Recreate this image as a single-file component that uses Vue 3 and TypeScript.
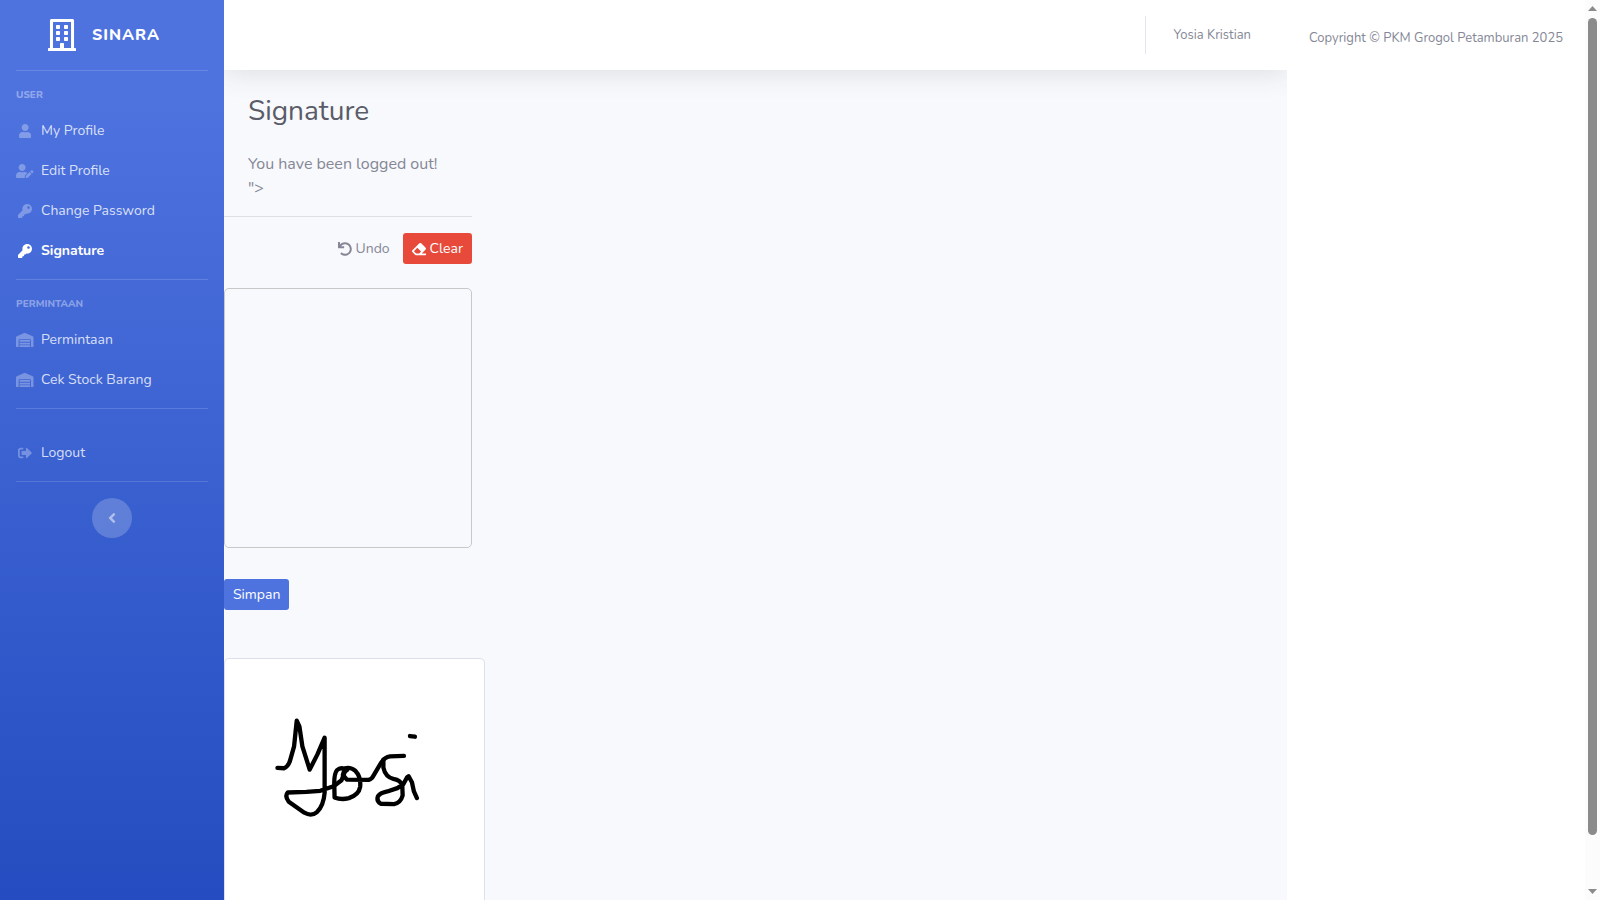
<script setup lang="ts">
interface Icon {
  width: number
  path: string
}

interface NavItem {
  label: string
  icon: Icon
  active?: boolean
}

interface NavGroup {
  heading?: string
  items: NavItem[]
}

const USER_HEAD = 'M224 256c70.7 0 128-57.3 128-128S294.7 0 224 0 96 57.3 96 128s57.3 128 128 128z'

const building: Icon = {
  width: 448,
  path: 'M128 148v-40c0-6.6 5.4-12 12-12h40c6.6 0 12 5.4 12 12v40c0 6.6-5.4 12-12 12h-40c-6.6 0-12-5.4-12-12zm140 12h40c6.6 0 12-5.4 12-12v-40c0-6.6-5.4-12-12-12h-40c-6.6 0-12 5.4-12 12v40c0 6.6 5.4 12 12 12zm-128 96h40c6.6 0 12-5.4 12-12v-40c0-6.6-5.4-12-12-12h-40c-6.6 0-12 5.4-12 12v40c0 6.6 5.4 12 12 12zm128 0h40c6.6 0 12-5.4 12-12v-40c0-6.6-5.4-12-12-12h-40c-6.6 0-12 5.4-12 12v40c0 6.6 5.4 12 12 12zm-76 84v-40c0-6.6-5.4-12-12-12h-40c-6.6 0-12 5.4-12 12v40c0 6.6 5.4 12 12 12h40c6.6 0 12-5.4 12-12zm76 12h40c6.6 0 12-5.4 12-12v-40c0-6.6-5.4-12-12-12h-40c-6.6 0-12 5.4-12 12v40c0 6.6 5.4 12 12 12zm180 124v36H0v-36c0-6.6 5.4-12 12-12h19.5V24c0-13.3 10.7-24 24-24h337c13.3 0 24 10.7 24 24v440H436c6.6 0 12 5.4 12 12zM79.5 463H192v-67c0-6.6 5.4-12 12-12h40c6.6 0 12 5.4 12 12v67h112.500V49L80 48l-.5 415z',
}
const user: Icon = {
  width: 448,
  path: USER_HEAD + 'm89.6 32h-16.7c-22.2 10.2-46.9 16-72.9 16s-50.6-5.8-72.9-16h-16.7C60.2 288 0 348.2 0 422.4V464c0 26.5 21.5 48 48 48h352c26.5 0 48-21.5 48-48v-41.6c0-74.2-60.2-134.4-134.4-134.4z',
}
const userEdit: Icon = {
  width: 640,
  path: USER_HEAD + 'm89.6 32h-16.7c-22.2 10.2-46.9 16-72.9 16s-50.6-5.8-72.9-16h-16.7C60.2 288 0 348.2 0 422.4V464c0 26.5 21.5 48 48 48h274.9c-2.4-6.8-3.4-14-2.600-21.3l6.800-60.900 1.200-11.100 7.900-7.900 77.300-77.300c-24.500-27.700-60-45.500-99.900-45.500zm45.300 145.300l-6.800 61c-1.100 10.200 7.500 18.800 17.600 17.600l60.900-6.800 137.900-137.900-71.700-71.700-137.900 137.800zM633 268.900L595.100 231c-9.300-9.300-24.500-9.300-33.800 0l-37.800 37.800-4.100 4.100 71.800 71.700 41.800-41.800c9.300-9.400 9.300-24.500 0-33.900z',
}
const key: Icon = {
  width: 512,
  path: 'M512 176.001C512 273.203 433.202 352 336 352c-11.22 0-22.19-1.062-32.827-3.069l-24.012 27.014A23.999 23.999 0 0 1 261.223 384H224v40c0 13.255-10.745 24-24 24h-40v40c0 13.255-10.745 24-24 24H24c-13.255 0-24-10.745-24-24v-78.059c0-6.365 2.529-12.47 7.029-16.971l161.802-161.802C163.108 213.814 160 195.271 160 176 160 78.798 238.797.001 335.999 0 433.488-.001 512 78.511 512 176.001zM336 128c0 26.51 21.49 48 48 48s48-21.49 48-48-21.49-48-48-48-48 21.49-48 48z',
}
const warehouse: Icon = {
  width: 640,
  path: 'M504 352H136.400c-4.400 0-8 3.600-8 8l-.1 48c0 4.400 3.600 8 8 8H504c4.400 0 8-3.600 8-8v-48c0-4.400-3.600-8-8-8zm0 96H136.100c-4.400 0-8 3.600-8 8l-.1 48c0 4.400 3.600 8 8 8h368c4.400 0 8-3.600 8-8v-48c0-4.400-3.600-8-8-8zm0-192H136.600c-4.400 0-8 3.600-8 8l-.1 48c0 4.400 3.600 8 8 8H504c4.400 0 8-3.600 8-8v-48c0-4.400-3.600-8-8-8zm106.500-139L338.400 3.700a48.150 48.150 0 0 0-36.900 0L29.500 117C11.700 124.500 0 141.900 0 161.300V504c0 4.400 3.600 8 8 8h80c4.400 0 8-3.600 8-8V256c0-17.600 14.600-32 32.600-32h382.800c18 0 32.600 14.400 32.600 32v248c0 4.400 3.600 8 8 8h80c4.400 0 8-3.600 8-8V161.300c0-19.400-11.700-36.800-29.500-44.300z',
}
const signOut: Icon = {
  width: 512,
  path: 'M497 273L329 441c-15 15-41 4.500-41-17v-96H152c-13.300 0-24-10.700-24-24v-96c0-13.300 10.700-24 24-24h136V88c0-21.400 25.900-32 41-17l168 168c9.300 9.400 9.300 24.600 0 34zM192 436v-40c0-6.600-5.400-12-12-12H96c-17.700 0-32-14.300-32-32V160c0-17.700 14.300-32 32-32h84c6.600 0 12-5.400 12-12V76c0-6.600-5.400-12-12-12H96c-53 0-96 43-96 96v192c0 53 43 96 96 96h84c6.600 0 12-5.400 12-12z',
}
const angleLeft: Icon = {
  width: 256,
  path: 'M31.7 239l136-136c9.400-9.400 24.600-9.400 33.900 0l22.600 22.600c9.400 9.400 9.400 24.600 0 33.900L127.900 256l96.400 96.400c9.400 9.400 9.400 24.600 0 33.900L201.700 409c-9.400 9.400-24.600 9.400-33.900 0l-136-136c-9.500-9.400-9.500-24.600-.1-34z',
}
const undo: Icon = {
  width: 512,
  path: 'M212.333 224.333H12c-6.627 0-12-5.373-12-12V12C0 5.373 5.373 0 12 0h48c6.627 0 12 5.373 12 12v78.112C117.773 39.279 184.26 7.47 258.175 8.007c136.906.994 246.448 111.623 246.157 248.532C504.041 393.258 393.12 504 256.333 504c-64.089 0-122.496-24.313-166.51-64.215-5.099-4.622-5.334-12.554-.467-17.42l33.967-33.967c4.474-4.474 11.662-4.717 16.401-.525C170.76 415.336 211.58 432 256.333 432c97.268 0 176-78.716 176-176 0-97.267-78.716-176-176-176-58.496 0-110.28 28.476-142.274 72.333h98.274c6.627 0 12 5.373 12 12v48c0 6.627-5.373 12-12 12z',
}
const eraser: Icon = {
  width: 512,
  path: 'M497.941 273.941c18.745-18.745 18.745-49.137 0-67.882l-160-160c-18.745-18.745-49.136-18.746-67.883 0l-256 256c-18.745 18.745-18.745 49.137 0 67.882l96 96A48.004 48.004 0 0 0 144 480h356c6.627 0 12-5.373 12-12v-40c0-6.627-5.373-12-12-12H355.883l142.058-142.059zm-302.627-62.627l137.373 137.373L265.373 416H150.628l-80-80 124.686-124.686z',
}

const groups: NavGroup[] = [
  {
    heading: 'User',
    items: [
      { label: 'My Profile', icon: user },
      { label: 'Edit Profile', icon: userEdit },
      { label: 'Change Password', icon: key },
      { label: 'Signature', icon: key, active: true },
    ],
  },
  {
    heading: 'Permintaan',
    items: [
      { label: 'Permintaan', icon: warehouse },
      { label: 'Cek Stock Barang', icon: warehouse },
    ],
  },
  { items: [{ label: 'Logout', icon: signOut }] },
]

const strokes: string[] = [
  'M53 205 L73 206 Q84 202 90 186 L103 140 L111 63 L119 80 L128 140 L150 210 L173 165 L195 114 L195 280 Q192 318 172 338 Q155 352 134 340 L87 307 Q74 290 84 279 L140 277 L182 274 L222 260 L246 242 L257 214',
  'M262 212 Q245 200 232 212 Q224 222 224 250 L225 294 Q245 302 268 296 Q298 286 302 262 Q305 232 288 214 Q274 202 256 206 L250 226 L262 240 L328 241 Q338 238 344 225 L366 188 Q376 172 392 170 L434 169',
  'M372 180 L372 204 Q378 232 402 238 Q424 242 429 258 L430 288 Q424 310 404 314 L364 313 Q350 304 356 290 Q364 280 384 276 L414 266 L432 254 L443 234 L448 230 L458 248 L464 276 L473 296',
  'M452 109 L467 111',
]
</script>

<template>
  <div class="shell">
    <div class="page">
      <nav class="sidebar" aria-label="Main">
        <a class="brand" href="#">
          <svg class="brand-icon" :viewBox="`0 0 ${building.width} 512`" aria-hidden="true"><path :d="building.path" /></svg>
          <span>SINARA</span>
        </a>
        <section v-for="(group, i) in groups" :key="i" class="group">
          <h2 v-if="group.heading" class="group-heading">{{ group.heading }}</h2>
          <ul class="nav-list">
            <li v-for="item in group.items" :key="item.label">
              <a class="nav-link" :class="{ active: item.active }" href="#">
                <span class="nav-icon">
                  <svg :viewBox="`0 0 ${item.icon.width} 512`" aria-hidden="true"><path :d="item.icon.path" /></svg>
                </span>
                <span>{{ item.label }}</span>
              </a>
            </li>
          </ul>
        </section>
        <div class="toggle-row">
          <button class="toggle" type="button" aria-label="Collapse sidebar">
            <svg :viewBox="`0 0 ${angleLeft.width} 512`" aria-hidden="true"><path :d="angleLeft.path" /></svg>
          </button>
        </div>
      </nav>

      <main class="content">
        <header class="topbar">
          <a class="account" href="#">Yosia Kristian</a>
        </header>
        <div class="intro">
          <h1>Signature</h1>
          <p>You have been logged out!<br />"&gt;</p>
        </div>
        <div class="signer">
          <div class="actions">
            <button class="btn plain" type="button">
              <svg :viewBox="`0 0 ${undo.width} 512`" aria-hidden="true"><path :d="undo.path" /></svg>
              <span>Undo</span>
            </button>
            <button class="btn danger" type="button">
              <svg :viewBox="`0 0 ${eraser.width} 512`" aria-hidden="true"><path :d="eraser.path" /></svg>
              <span>Clear</span>
            </button>
          </div>
          <canvas class="pad" aria-label="Signature pad"></canvas>
          <button class="btn primary" type="button">Simpan</button>
        </div>
        <figure class="saved">
          <svg viewBox="0 0 252 252" role="img" aria-label="Saved signature">
            <g transform="translate(31 37) scale(0.33333)">
              <path v-for="(d, i) in strokes" :key="i" :d="d" />
            </g>
          </svg>
        </figure>
      </main>

      <footer class="footer">Copyright © PKM Grogol Petamburan 2025</footer>
    </div>

    <div class="scrollbar" aria-hidden="true">
      <svg viewBox="0 0 9 5"><path d="M0 5 4.500 0 9 5z" /></svg>
      <span class="thumb"></span>
      <svg viewBox="0 0 9 5"><path d="M0 0 4.500 5 9 0z" /></svg>
    </div>
  </div>
</template>

<style>
body {
  margin: 0;
  background: #fff;
}
</style>

<style scoped>
.shell {
  display: flex;
  height: 100vh;
  overflow: hidden;
  font-family: Nunito, Lato, "Open Sans", sans-serif;
  font-size: 16px;
  line-height: 24px;
  color: #858796;
}

.shell * {
  box-sizing: border-box;
}

svg {
  display: block;
  fill: currentColor;
}

a {
  color: inherit;
  text-decoration: none;
}

.page {
  display: flex;
  flex: 1;
  min-width: 0;
  align-self: flex-start;
  min-height: 100vh;
}

.sidebar {
  position: relative;
  z-index: 2;
  flex: 0 0 224px;
  background: linear-gradient(180deg, #4e73df 10%, #224abe 100%);
  color: #fff;
}

.brand {
  display: flex;
  align-items: center;
  justify-content: center;
  gap: 16px;
  height: 70px;
  padding: 0 32px 0 16px;
  font-weight: 800;
  letter-spacing: 1px;
}

.brand-icon {
  width: 28px;
  height: 32px;
}

.group {
  margin: 0 16px;
  padding: 16px 0 8px;
  border-top: 1px solid rgba(255, 255, 255, 0.15);
}

.group:nth-of-type(3) {
  padding-top: 24px;
}

.group-heading {
  margin: 0 0 8px;
  font-size: 10px;
  line-height: 16px;
  font-weight: 800;
  text-transform: uppercase;
  color: rgba(255, 255, 255, 0.4);
}

.nav-list {
  margin: 0;
  padding: 0;
  list-style: none;
}

.nav-link {
  display: flex;
  align-items: center;
  gap: 7px;
  height: 40px;
  font-size: 14px;
  color: rgba(255, 255, 255, 0.8);
}

.nav-icon {
  display: flex;
  justify-content: center;
  width: 18px;
  color: rgba(255, 255, 255, 0.3);
}

.nav-icon svg {
  height: 14px;
  max-width: 18px;
}

.active {
  font-weight: 700;
  color: #fff;
}

.active .nav-icon {
  color: #fff;
}

.toggle-row {
  display: flex;
  justify-content: center;
  margin: 0 16px;
  padding-top: 16px;
  border-top: 1px solid rgba(255, 255, 255, 0.15);
}

.toggle {
  display: flex;
  align-items: center;
  justify-content: center;
  width: 40px;
  height: 40px;
  padding: 0;
  border: 0;
  border-radius: 50%;
  background: rgba(255, 255, 255, 0.2);
  color: rgba(255, 255, 255, 0.5);
}

.toggle svg {
  height: 16px;
}

.content {
  flex: 1;
  min-width: 0;
  background: #f8f9fc;
}

.topbar {
  display: flex;
  align-items: center;
  justify-content: flex-end;
  height: 70px;
  padding: 0 36px;
  background: #fff;
  box-shadow: 0 2px 28px 0 rgba(58, 59, 69, 0.15);
}

.account {
  padding-left: 28px;
  border-left: 1px solid #e3e6f0;
  font-size: 13px;
  line-height: 38px;
}

.intro {
  padding: 24px 24px 16px;
}

.intro h1 {
  margin: 0 0 24px;
  font-size: 28px;
  line-height: 34px;
  font-weight: 400;
  color: #5a5c69;
}

.intro p {
  margin: 0;
}

.signer {
  width: 248px;
}

.actions {
  display: flex;
  justify-content: flex-end;
  gap: 4px;
  padding: 16px 0 24px;
  border-top: 1px solid #dddfe5;
}

.btn {
  display: inline-flex;
  align-items: center;
  gap: 4px;
  height: 31px;
  padding: 0 9px;
  border: 0;
  border-radius: 3px;
  font: inherit;
  font-size: 14px;
  color: #fff;
}

.btn svg {
  width: 14px;
  height: 14px;
}

.plain {
  background: transparent;
  color: #858796;
}

.danger {
  background: #e74a3b;
}

.primary {
  background: #4e73df;
}

.pad {
  display: block;
  width: 248px;
  height: 260px;
  margin-bottom: 31px;
  border: 1px solid #c8c8c8;
  border-radius: 5px;
}

.saved {
  width: 261px;
  margin: 48px 0 32px;
  padding: 4px;
  border: 1px solid #dddfeb;
  border-radius: 5px;
  background: #fff;
}

.saved path {
  fill: none;
  stroke: #000;
  stroke-width: 13;
  stroke-linecap: round;
  stroke-linejoin: round;
}

.footer {
  position: relative;
  z-index: 1;
  flex: 0 0 298px;
  padding: 26px 22px;
  background: #fff;
  font-size: 13px;
  white-space: nowrap;
}

.scrollbar {
  display: flex;
  flex: 0 0 15px;
  flex-direction: column;
  align-items: center;
  gap: 7px;
  padding: 6px 0;
  background: #fcfcfc;
  color: #8b8b8b;
}

.scrollbar svg {
  width: 9px;
  height: 5px;
}

.thumb {
  width: 9px;
  height: 92%;
  margin-bottom: auto;
  border-radius: 5px;
  background: #8b8b8b;
}
</style>
